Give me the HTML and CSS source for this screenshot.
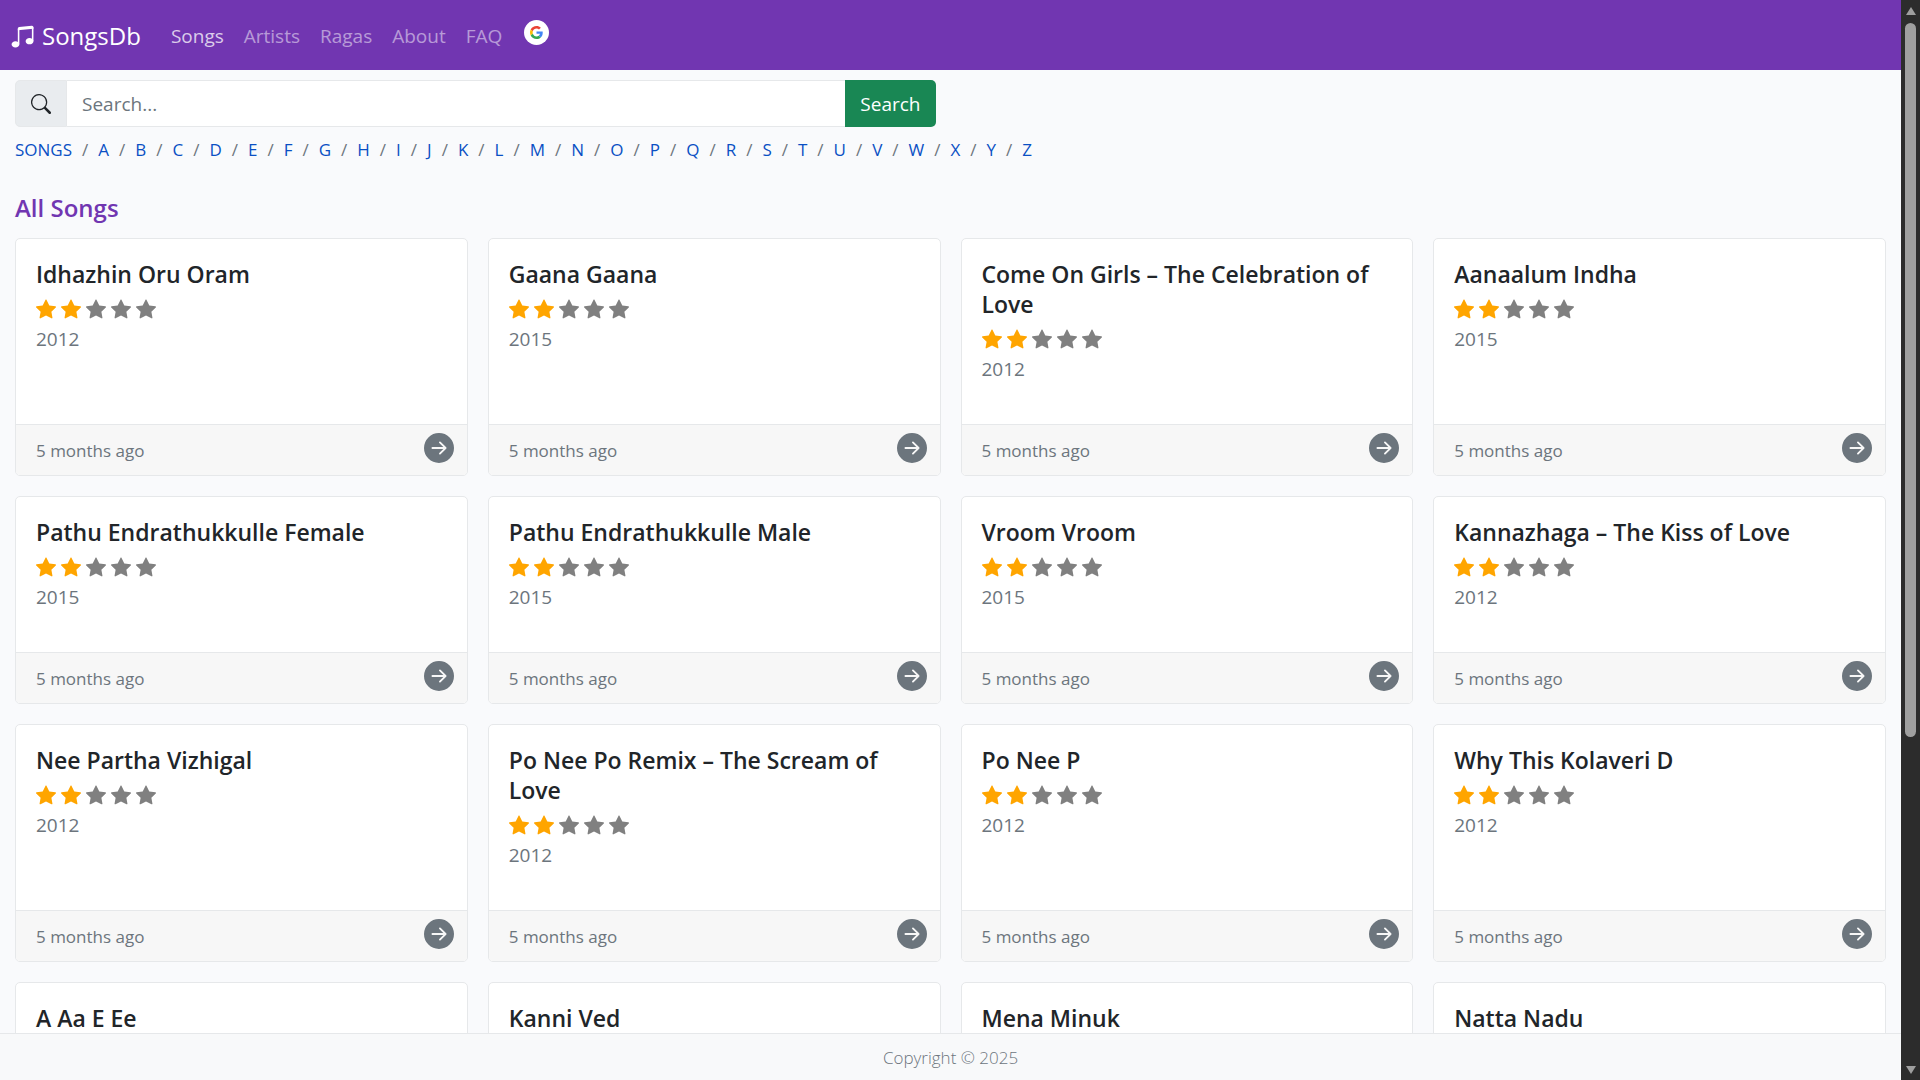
FILE: index.html
```html
<!DOCTYPE html>
<html lang="en">
<head>
    <meta charset="UTF-8">
    <meta name="viewport" content="width=device-width, initial-scale=1.0">
    <title>SongsDb - All Songs</title>
    <link rel="stylesheet" href="styles.css">
</head>
<body>
    <svg class="icon-defs" aria-hidden="true">
        <symbol id="icon-star" viewBox="0 0 16 16">
            <path d="M3.612 15.443c-.386.198-.824-.149-.746-.592l.83-4.73L.173 6.765c-.329-.314-.158-.888.283-.95l4.898-.696L7.538.792c.197-.39.73-.39.927 0l2.184 4.327 4.898.696c.441.062.612.636.282.95l-3.522 3.356.83 4.73c.078.443-.36.79-.746.592L8 13.187l-4.389 2.256z"/>
        </symbol>
        <symbol id="icon-arrow" viewBox="0 0 16 16">
            <path d="M8 0a8 8 0 1 1 0 16A8 8 0 0 1 8 0zM4.5 7.5a.5.5 0 0 0 0 1h5.793l-2.147 2.146a.5.5 0 0 0 .708.708l3-3a.5.5 0 0 0 0-.708l-3-3a.5.5 0 1 0-.708.708L10.293 7.5H4.5z"/>
        </symbol>
    </svg>

    <div class="page">
        <nav class="navbar">
            <a class="brand" href="#">
                <svg class="brand-icon" viewBox="0 0 16 16" aria-hidden="true">
                    <path d="M6 13c0 1.105-1.12 2-2.5 2S1 14.105 1 13c0-1.104 1.12-2 2.5-2s2.5.896 2.5 2zm9-2c0 1.105-1.12 2-2.5 2s-2.5-.895-2.5-2 1.12-2 2.5-2 2.5.895 2.5 2z"/>
                    <path fill-rule="evenodd" d="M14 11V2h1v9h-1zM6 3v10H5V3h1z"/>
                    <path d="M5 2.905a1 1 0 0 1 .9-.995l8-.8a1 1 0 0 1 1.1.995V3L5 4V2.905z"/>
                </svg>
                SongsDb
            </a>
            <div class="nav-links">
                <a class="nav-link active" href="#">Songs</a>
                <a class="nav-link" href="#">Artists</a>
                <a class="nav-link" href="#">Ragas</a>
                <a class="nav-link" href="#">About</a>
                <a class="nav-link" href="#">FAQ</a>
            </div>
            <a class="google-btn" href="#" aria-label="Sign in with Google">
                <svg viewBox="0 0 48 48" aria-hidden="true">
                    <path fill="#EA4335" d="M24 9.5c3.54 0 6.71 1.22 9.21 3.6l6.85-6.85C35.9 2.38 30.47 0 24 0 14.62 0 6.51 5.38 2.56 13.22l7.98 6.19C12.43 13.72 17.74 9.5 24 9.5z"/>
                    <path fill="#4285F4" d="M46.98 24.55c0-1.57-.15-3.09-.38-4.55H24v9.02h12.94c-.58 2.96-2.26 5.48-4.78 7.18l7.73 6c4.51-4.18 7.09-10.36 7.09-17.65z"/>
                    <path fill="#FBBC05" d="M10.53 28.59c-.48-1.45-.76-2.99-.76-4.59s.27-3.14.76-4.59l-7.98-6.19C.92 16.46 0 20.12 0 24c0 3.88.92 7.54 2.56 10.78l7.97-6.19z"/>
                    <path fill="#34A853" d="M24 48c6.48 0 11.93-2.13 15.89-5.81l-7.73-6c-2.15 1.45-4.92 2.3-8.16 2.3-6.26 0-11.57-4.22-13.47-9.91l-7.98 6.19C6.51 42.62 14.62 48 24 48z"/>
                </svg>
            </a>
        </nav>

        <main class="content">
            <form class="search-group">
                <label class="search-addon" for="search" aria-label="Search songs">
                    <svg viewBox="0 0 16 16" aria-hidden="true">
                        <path d="M11.742 10.344a6.5 6.5 0 1 0-1.397 1.398h-.001c.03.04.062.078.098.115l3.85 3.85a1 1 0 0 0 1.415-1.414l-3.85-3.85a1.007 1.007 0 0 0-.115-.1zM12 6.5a5.5 5.5 0 1 1-11 0 5.5 5.5 0 0 1 11 0z"/>
                    </svg>
                </label>
                <input class="search-input" id="search" type="text" placeholder="Search...">
                <button class="search-btn" type="submit">Search</button>
            </form>

            <ol class="letters" id="letters">
                <li><a href="#">SONGS</a></li>
            </ol>

            <h1 class="list-title">All Songs</h1>
            <div class="song-grid" id="songs"></div>
        </main>

        <footer class="page-footer">Copyright © 2025</footer>
    </div>

    <div class="scrollbar" aria-hidden="true">
        <svg class="scroll-arrow" viewBox="0 0 12 10"><path d="M6 1L11 9H1z"/></svg>
        <div class="scroll-track"><div class="scroll-thumb"></div></div>
        <svg class="scroll-arrow" viewBox="0 0 12 10"><path d="M6 9L1 1h10z"/></svg>
    </div>

    <script src="script.js"></script>
</body>
</html>
```
FILE: styles.css
```css
* {
    box-sizing: border-box;
    margin: 0;
    padding: 0;
}

body {
    display: flex;
    height: 100vh;
    overflow: hidden;
    background: #f9fafc;
    color: #212529;
    font-family: 'Segoe UI', 'Open Sans', 'Noto Sans', sans-serif;
    font-size: 19px;
    line-height: 30px;
}

a {
    text-decoration: none;
}

svg {
    display: block;
    fill: currentColor;
}

.icon-defs {
    position: absolute;
    width: 0;
    height: 0;
}

.page {
    flex: 1;
    min-width: 0;
    display: flex;
    flex-direction: column;
}

/* Navbar */
.navbar {
    flex: none;
    display: flex;
    align-items: center;
    height: 70px;
    padding: 2px 10px 0;
    background: #7136b1;
}

.brand {
    display: flex;
    align-items: center;
    gap: 7px;
    margin-right: 20px;
    color: #fff;
    font-size: 24px;
}

.brand-icon {
    width: 25px;
    height: 25px;
}

.nav-links {
    display: flex;
}

.nav-link {
    padding: 10px;
    color: rgba(255, 255, 255, 0.5);
}

.nav-link:hover,
.nav-link.active {
    color: rgba(255, 255, 255, 0.75);
}

.google-btn {
    display: flex;
    align-items: center;
    justify-content: center;
    width: 25px;
    height: 25px;
    margin: 0 12px 8px;
    border-radius: 50%;
    background: #fff;
}

.google-btn svg {
    width: 13px;
    height: 13px;
}

/* Search */
.content {
    flex: 1;
    min-height: 0;
    overflow-y: auto;
    scrollbar-width: none;
    padding: 10px 15px 0;
}

.search-group {
    display: flex;
    width: calc(50% - 15px);
    height: 47px;
}

.search-addon {
    display: flex;
    align-items: center;
    padding: 0 15px;
    border: 1px solid #e6e8ea;
    border-radius: 5px 0 0 5px;
    background: #e9ecef;
}

.search-addon svg {
    width: 20px;
    height: 20px;
}

.search-input {
    flex: 1;
    min-width: 0;
    padding: 0 15px;
    border: 1px solid #e6e8ea;
    border-left: none;
    border-right: none;
    background: #fff;
    color: inherit;
    font: inherit;
}

.search-input::placeholder {
    color: #6c757d;
    opacity: 1;
}

.search-btn {
    padding: 0 15px;
    border: none;
    border-radius: 0 5px 5px 0;
    background: #198754;
    color: #fff;
    font: inherit;
    cursor: pointer;
}

.search-btn:hover {
    background: #157347;
}

/* Letter index */
.letters {
    display: flex;
    flex-wrap: wrap;
    margin: 10px 0 30px;
    list-style: none;
    font-size: 17px;
    line-height: 26px;
}

.letters a {
    color: #0a50c4;
}

.letters li + li::before {
    content: '/';
    padding: 0 10px;
    color: #6c757d;
}

/* Songs */
.list-title {
    margin-bottom: 15px;
    color: #7136b1;
    font-size: 24px;
    font-weight: 600;
    line-height: 30px;
}

.song-grid {
    display: grid;
    grid-template-columns: repeat(4, 1fr);
    gap: 20px;
}

.card {
    display: flex;
    flex-direction: column;
    border: 1px solid #e6e8ea;
    border-radius: 5px;
    background: #fff;
    overflow: hidden;
}

.card-body {
    flex: 1;
    padding: 20px 20px 40px;
    color: #6c757d;
}

.card-title {
    margin-bottom: 5px;
    color: #212529;
    font-size: 23px;
    font-weight: 600;
    line-height: 30px;
}

.stars {
    display: flex;
    align-items: center;
    gap: 5px;
    height: 30px;
    color: gray;
}

.stars svg {
    width: 20px;
    height: 20px;
}

.stars .on {
    color: orange;
}

.card-footer {
    display: flex;
    justify-content: space-between;
    padding: 8px 13px 11px 20px;
    border-top: 1px solid #e6e8ea;
    background: #f7f7f7;
    color: #6c757d;
}

.card-footer span {
    padding-top: 5px;
    font-size: 17px;
    line-height: 26px;
}

.card-footer a {
    color: #6c757d;
}

.card-footer svg {
    width: 30px;
    height: 30px;
}

/* Footer */
.page-footer {
    flex: none;
    padding: 9px 8px 7px;
    border-top: 1px solid #e6e8ea;
    background: #f8f9fa;
    color: #6c757d;
    font-size: 17px;
    font-weight: 300;
    text-align: center;
}

/* Scrollbar */
.scrollbar {
    flex: none;
    display: flex;
    flex-direction: column;
    align-items: center;
    gap: 7px;
    width: 19px;
    padding: 6px 0 5px;
    background: #2c2c2c;
    color: #9f9f9f;
}

.scroll-arrow {
    width: 12px;
    height: 10px;
}

.scroll-track {
    flex: 1;
    width: 11px;
}

.scroll-thumb {
    height: 69%;
    border-radius: 6px;
    background: #9f9f9f;
}

@media (max-width: 1100px) {
    .song-grid {
        grid-template-columns: repeat(2, 1fr);
    }

    .search-group {
        width: 100%;
    }
}
```
FILE: script.js
```js
const songs = [
    { title: 'Idhazhin Oru Oram', year: 2012 },
    { title: 'Gaana Gaana', year: 2015 },
    { title: 'Come On Girls – The Celebration of Love', year: 2012 },
    { title: 'Aanaalum Indha', year: 2015 },
    { title: 'Pathu Endrathukkulle Female', year: 2015 },
    { title: 'Pathu Endrathukkulle Male', year: 2015 },
    { title: 'Vroom Vroom', year: 2015 },
    { title: 'Kannazhaga – The Kiss of Love', year: 2012 },
    { title: 'Nee Partha Vizhigal', year: 2012 },
    { title: 'Po Nee Po Remix – The Scream of Love', year: 2012 },
    { title: 'Po Nee P', year: 2012 },
    { title: 'Why This Kolaveri D', year: 2012 },
    { title: 'A Aa E Ee' },
    { title: 'Kanni Ved' },
    { title: 'Mena Minuk' },
    { title: 'Natta Nadu' }
];

// Letter links A-Z
const letters = document.getElementById('letters');
for (const letter of 'ABCDEFGHIJKLMNOPQRSTUVWXYZ') {
    letters.insertAdjacentHTML('beforeend', `<li><a href="#">${letter}</a></li>`);
}

function renderStars(rating) {
    let html = '';
    for (let i = 0; i < 5; i++) {
        html += `<svg class="${i < rating ? 'on' : ''}"><use href="#icon-star"/></svg>`;
    }
    return html;
}

// Song cards
document.getElementById('songs').innerHTML = songs.map(song => `
    <article class="card">
        <div class="card-body">
            <h2 class="card-title">${song.title}</h2>
            <div class="stars" role="img" aria-label="2 of 5 stars">${renderStars(2)}</div>
            ${song.year ? `<p>${song.year}</p>` : ''}
        </div>
        <div class="card-footer">
            <span>5 months ago</span>
            <a href="#" aria-label="Open ${song.title}"><svg><use href="#icon-arrow"/></svg></a>
        </div>
    </article>
`).join('');
```
